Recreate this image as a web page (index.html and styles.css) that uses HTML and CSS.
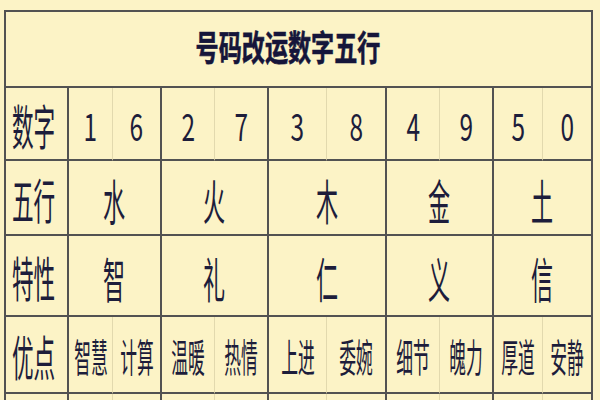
FILE: index.html
```html
<!DOCTYPE html>
<html lang="zh">
<head>
<meta charset="utf-8">
<title>号码改运数字五行</title>
<link rel="stylesheet" href="styles.css">
</head>
<body>
<div class="grid">
  <div class="cell title span11"><span class="tt">号码改运数字五行</span></div>

  <div class="cell label"><span class="lb">数字</span></div>
  <div class="cell lite"><span class="num">1</span></div>
  <div class="cell"><span class="num">6</span></div>
  <div class="cell lite"><span class="num">2</span></div>
  <div class="cell"><span class="num">7</span></div>
  <div class="cell lite"><span class="num">3</span></div>
  <div class="cell"><span class="num">8</span></div>
  <div class="cell lite"><span class="num">4</span></div>
  <div class="cell"><span class="num">9</span></div>
  <div class="cell lite"><span class="num">5</span></div>
  <div class="cell"><span class="num">0</span></div>

  <div class="cell label"><span class="lb">五行</span></div>
  <div class="cell span2"><span class="big">水</span></div>
  <div class="cell span2"><span class="big">火</span></div>
  <div class="cell span2"><span class="big">木</span></div>
  <div class="cell span2"><span class="big">金</span></div>
  <div class="cell span2"><span class="big">土</span></div>

  <div class="cell label"><span class="lb">特性</span></div>
  <div class="cell span2"><span class="big">智</span></div>
  <div class="cell span2"><span class="big">礼</span></div>
  <div class="cell span2"><span class="big">仁</span></div>
  <div class="cell span2"><span class="big">义</span></div>
  <div class="cell span2"><span class="big">信</span></div>

  <div class="cell label"><span class="lb">优点</span></div>
  <div class="cell lite"><span class="sm">智慧</span></div>
  <div class="cell"><span class="sm">计算</span></div>
  <div class="cell lite"><span class="sm">温暖</span></div>
  <div class="cell"><span class="sm">热情</span></div>
  <div class="cell lite"><span class="sm">上进</span></div>
  <div class="cell"><span class="sm">委婉</span></div>
  <div class="cell lite"><span class="sm">细节</span></div>
  <div class="cell"><span class="sm">魄力</span></div>
  <div class="cell lite"><span class="sm">厚道</span></div>
  <div class="cell"><span class="sm">安静</span></div>

  <div class="cell label end"></div>
  <div class="cell lite end"></div>
  <div class="cell end"></div>
  <div class="cell lite end"></div>
  <div class="cell end"></div>
  <div class="cell lite end"></div>
  <div class="cell end"></div>
  <div class="cell lite end"></div>
  <div class="cell end"></div>
  <div class="cell lite end"></div>
  <div class="cell end"></div>
</div>
</body>
</html>
```

FILE: styles.css
```css
html, body {
  margin: 0;
  padding: 0;
  background: #fcf3c6;
  overflow: hidden;
}
body {
  width: 600px;
  height: 400px;
  padding: 10px 0 0 4px;
  box-sizing: border-box;
  font-family: "Noto Sans CJK SC", "Noto Sans", sans-serif;
  color: #1d1d3b;
}
.grid {
  display: grid;
  width: max-content;
  grid-template-columns: 63px 44px 49px 53px 54px 58px 60px 53px 54px 49px 50px;
  grid-template-rows: 76px 73px 75px 81px 77px 6px;
  border-top: 2px solid #525252;
  border-left: 2px solid #525252;
}
.cell {
  display: flex;
  justify-content: center;
  align-items: center;
  border-right: 2px solid #525252;
  border-bottom: 2px solid #525252;
  box-sizing: border-box;
  line-height: 1;
  overflow: visible;
  min-width: 0;
}
.cell.lite {
  border-right: 1px solid #e2d9ae;
}
.cell.end {
  border-bottom: 0;
}
.span2 { grid-column: span 2; }
.span11 { grid-column: span 11; }
.title {
  padding: 0 20px 8px 0;
}
.tt {
  display: inline-block;
  font-size: 35px;
  font-weight: 700;
  color: #15153a;
  transform: scaleX(0.66);
  white-space: nowrap;
  -webkit-text-stroke: 0.6px #15153a;
}
.label {
  justify-content: flex-start;
  padding-left: 6px;
}
.lb {
  display: inline-block;
  font-size: 48px;
  transform: scaleX(0.45);
  transform-origin: left center;
  white-space: nowrap;
}
.num {
  display: inline-block;
  font-size: 37px;
  transform: scaleX(0.66);
  margin-top: 4px;
}
.big {
  display: inline-block;
  font-size: 48px;
  transform: scaleX(0.46);
  margin-top: 2px;
}
.sm {
  display: inline-block;
  font-size: 39px;
  transform: scaleX(0.43);
  white-space: nowrap;
  margin-top: 2px;
}
```
